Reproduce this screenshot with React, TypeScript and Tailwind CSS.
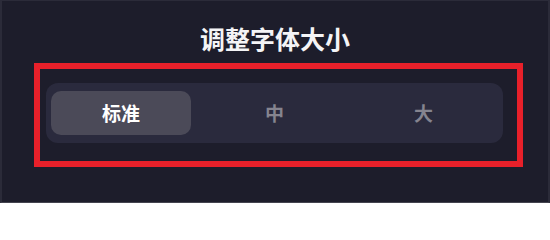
const options = ["标准", "中", "大"];

export default function App() {
  const selected = 0;

  return (
    <div
      className="h-[203px] w-[550px] overflow-hidden border-l-2 border-b border-r-2 border-t border-l-[#2b2b39] border-b-[#44444f] border-r-[#2b2b39] border-t-[#2b2b39] bg-[#1d1d2b]"
      style={{ fontFamily: '"Noto Sans CJK SC", "Noto Sans", sans-serif' }}
    >
      <h1 className="mt-[25px] text-center text-[25px] font-bold leading-[25px] text-[#f4f4f6]">
        调整字体大小
      </h1>
      <div className="mt-[12px] ml-[32px] w-[489px] border-[6px] border-[#e8202a] pb-[18px] pl-[6px] pr-[14px] pt-[14px]">
        <div className="flex h-[60px] rounded-[12px] bg-[#2a2a3d] px-[5px] py-[8px]">
          {options.map((label, i) => (
            <div key={label} className="flex flex-1">
              {i === selected ? (
                <div className="mr-[9px] flex flex-1 items-center justify-center rounded-[10px] bg-[#4b4a58] text-[19px] font-bold text-white">
                  {label}
                </div>
              ) : (
                <div className="flex flex-1 items-center justify-center text-[19px] font-bold text-[#85848f]">
                  {label}
                </div>
              )}
            </div>
          ))}
        </div>
      </div>
    </div>
  );
}
